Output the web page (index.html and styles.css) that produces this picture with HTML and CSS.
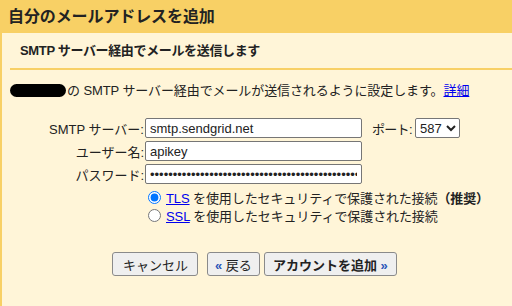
FILE: index.html
```html
<!DOCTYPE html>
<html lang="ja">

<head>
    <meta charset="UTF-8">
    <title>自分のメールアドレスを追加</title>
    <link rel="stylesheet" href="styles.css">
</head>

<body>
    <div class="title">自分のメールアドレスを追加</div>

    <div class="panel">
        <div class="section">SMTP サーバー経由でメールを送信します</div>

        <div class="content">
            <p class="desc"><span class="redacted"></span>の SMTP サーバー経由でメールが送信されるように設定します。<a href="#">詳細</a></p>

            <div class="form">
                <div class="row">
                    <label for="server">SMTP サーバー:</label>
                    <input type="text" id="server" value="smtp.sendgrid.net">
                    <label class="port-label" for="port">ポート:</label>
                    <select id="port">
                        <option>587</option>
                        <option>25</option>
                        <option>465</option>
                    </select>
                </div>
                <div class="row">
                    <label for="user">ユーザー名:</label>
                    <input type="text" id="user" value="apikey">
                </div>
                <div class="row">
                    <label for="pass">パスワード:</label>
                    <input type="password" id="pass" value="SG.xxxxxxxxxxxxxxxxxxxxxxxxxxxxxxxxxxxxxxxxxxxxxxxxxxxxxxxxxxxxxxxxxxx">
                </div>

                <div class="radios">
                    <label class="radio"><input type="radio" name="sec" checked><span><a href="#">TLS</a> を使用したセキュリティで保護された接続<b>（推奨）</b></span></label>
                    <label class="radio"><input type="radio" name="sec"><span><a href="#">SSL</a> を使用したセキュリティで保護された接続</span></label>
                </div>
            </div>

            <div class="buttons">
                <button class="btn cancel">キャンセル</button>
                <button class="btn back"><span class="arrow">«</span> 戻る</button>
                <button class="btn primary">アカウントを追加 <span class="arrow">»</span></button>
            </div>
        </div>
    </div>
</body>

</html>
```

FILE: styles.css
```css
body {
    margin: 0;
    height: 306px;
    background-color: #fff5d8;
    border-left: 2px solid #f8d065;
    box-sizing: border-box;
    font-family: "Liberation Sans", "Noto Sans CJK JP", sans-serif;
    font-size: 13px;
    color: #222;
}

.title {
    margin-left: -2px;
    height: 33px;
    line-height: 33px;
    padding-left: 8px;
    background-color: #f8d065;
    font-size: 16px;
    font-weight: bold;
    letter-spacing: -0.1px;
}

.panel {
    margin-left: 8px;
}

.section {
    height: 35px;
    line-height: 35px;
    padding-left: 10px;
    font-weight: bold;
    letter-spacing: -0.35px;
    border-bottom: 2px solid #f8d065;
}

.desc {
    margin: 12px 0 0;
    height: 17px;
    line-height: 17px;
    display: flex;
    align-items: center;
    letter-spacing: -0.1px;
}

.redacted {
    display: inline-block;
    width: 56px;
    height: 13px;
    margin-right: 1px;
    background: #000;
    border-radius: 7px;
    filter: blur(0.6px);
}

a {
    color: #0000ee;
}

.form {
    margin-top: 19px;
}

.row {
    display: flex;
    align-items: center;
    height: 20px;
    margin-bottom: 3px;
}

.row label {
    width: 134px;
    text-align: right;
    padding-right: 1px;
}

.row input {
    width: 217px;
    height: 20px;
    box-sizing: border-box;
    margin: 0;
    padding: 1px 4px;
    border: 1px solid #767676;
    border-radius: 2px;
    background: #fff;
    font-family: "Liberation Sans", sans-serif;
    font-size: 13px;
    color: #222;
}

.row .port-label {
    width: 40px;
    min-width: 0;
    flex-shrink: 0;
    margin-left: 10px;
    margin-right: 3px;
    padding-right: 0;
    text-align: left;
    white-space: nowrap;
    letter-spacing: -0.7px;
}

.row select {
    width: 45px;
    height: 20px;
    margin: 0;
    padding: 0;
    border: 1px solid #767676;
    border-radius: 2px;
    background: #fff;
    font-family: "Liberation Sans", sans-serif;
    font-size: 13px;
    color: #222;
}

.radios {
    margin-top: 4px;
    padding-left: 133px;
}

.radio {
    display: flex;
    align-items: center;
    height: 18px;
    letter-spacing: -0.1px;
}

.radio input {
    margin: 0 5px 0 5px;
    width: 13px;
    height: 13px;
}

.buttons {
    display: flex;
    margin-top: 28px;
    padding-left: 102px;
}

.btn {
    height: 24px;
    margin: 0;
    padding: 0 8px;
    border: 1px solid #8a8a8a;
    border-radius: 3px;
    background: #efefef;
    font-family: "Liberation Sans", "Noto Sans CJK JP", sans-serif;
    font-size: 13px;
    color: #222;
}

.cancel {
    padding: 0 9px 0 10px;
}

.back {
    margin-left: 9px;
    padding: 0 7px;
}

.primary {
    margin-left: 4px;
    font-weight: bold;
}

.arrow {
    color: #2a55b8;
    font-weight: bold;
}
```
